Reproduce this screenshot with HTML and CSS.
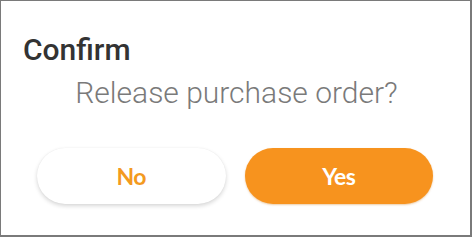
FILE: index.html
```html
<!DOCTYPE html>
<html>
<head>
<meta charset="utf-8">
<link rel="stylesheet" href="styles.css">
</head>
<body>
<div class="dialog">
  <div class="title">Confirm</div>
  <div class="message">Release purchase order?</div>
  <div class="actions">
    <button class="btn btn-no">No</button>
    <button class="btn btn-yes">Yes</button>
  </div>
</div>
</body>
</html>
```
FILE: styles.css
```css
html, body {
  margin: 0;
  padding: 0;
  background: #ffffff;
}
.dialog {
  box-sizing: border-box;
  width: 472px;
  height: 237px;
  border: 1px solid #7a7a7a;
  border-right-width: 2px;
  border-bottom-width: 2px;
  padding: 31px 0 0 0;
  font-family: Roboto, "Liberation Sans", sans-serif;
  display: flex;
  flex-direction: column;
}
.title {
  padding-left: 22px;
  font-size: 30px;
  line-height: 35px;
  font-weight: 500;
  color: #333333;
}
.message {
  margin-top: 8px;
  text-align: center;
  font-size: 30px;
  line-height: 35px;
  font-weight: 300;
  color: #7a7a7a;
  padding-left: 2px;
}
.actions {
  margin-top: 38px;
  display: flex;
  gap: 19px;
  padding: 0 37px 0 36px;
}
.btn {
  flex: 1;
  height: 56px;
  border-radius: 28px;
  border: none;
  font-family: Lato, "Open Sans", sans-serif;
  font-weight: 700;
  font-size: 23px;
  letter-spacing: -0.5px;
  cursor: pointer;
}
.btn-no {
  background: #ffffff;
  color: #f39a1f;
  box-shadow: 0 2px 4px rgba(0, 0, 0, 0.16), 0 0 1px rgba(0, 0, 0, 0.08);
}
.btn-yes {
  background: #f7931e;
  color: #ffffff;
  box-shadow: 0 1px 2px rgba(200, 110, 0, 0.35);
}
```
